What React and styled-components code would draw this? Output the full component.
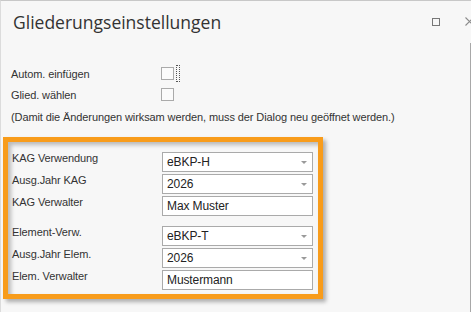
import React from 'react'
import styled, { createGlobalStyle } from 'styled-components'

const GlobalStyle = createGlobalStyle`
  html, body {
    margin: 0;
    padding: 0;
    background: #f7f7f7;
  }
`

const kagRows = [
  { label: 'KAG Verwendung', value: 'eBKP-H', select: true },
  { label: 'Ausg.Jahr KAG', value: '2026', select: true },
  { label: 'KAG Verwalter', value: 'Max Muster' },
]

const elemRows = [
  { label: 'Element-Verw.', value: 'eBKP-T', select: true },
  { label: 'Ausg.Jahr Elem.', value: '2026', select: true },
  { label: 'Elem. Verwalter', value: 'Mustermann' },
]

class App extends React.Component {
  renderRows(rows) {
    return rows.map(row => (
      <FieldRow key={row.label}>
        <Label>{row.label}</Label>
        <Field>
          {row.value}
          {row.select && <Arrow />}
        </Field>
      </FieldRow>
    ))
  }

  render() {
    return (
      <Window>
        <GlobalStyle />
        <TitleBar>
          <Title>Gliederungseinstellungen</Title>
          <WindowButtons>
            <MaxIcon />
            <CloseIcon viewBox="0 0 9 9">
              <path d="M0.5 0.5 L8.5 8.5 M8.5 0.5 L0.5 8.5" stroke="#8a8a8a" strokeWidth="1.1" />
            </CloseIcon>
          </WindowButtons>
        </TitleBar>

        <Body>
          <CheckRow>
            <Label>Autom. einfügen</Label>
            <CheckBox />
            <FocusRect />
          </CheckRow>
          <CheckRow>
            <Label>Glied. wählen</Label>
            <CheckBox />
          </CheckRow>
          <Note>
            (Damit die Änderungen wirksam werden, muss der Dialog neu geöffnet
            werden.)
          </Note>

          <Highlight>
            <Group>{this.renderRows(kagRows)}</Group>
            <Group>{this.renderRows(elemRows)}</Group>
          </Highlight>
        </Body>
      </Window>
    )
  }
}

export default App

const Window = styled.div`
  width: 471px;
  height: 312px;
  box-sizing: border-box;
  border-top: 1px solid #c8c8c8;
  border-left: 1px solid #dcdcdc;
  background: #f7f7f7;
  overflow: hidden;
  display: flex;
  flex-direction: column;
  font-family: 'Liberation Sans', Arial, sans-serif;
  font-size: 11px;
  letter-spacing: -0.1px;
  color: #333;
`

const TitleBar = styled.div`
  height: 42px;
  display: flex;
  align-items: center;
  justify-content: space-between;
  padding-left: 12px;
  flex-shrink: 0;
`

const Title = styled.div`
  font-family: 'Open Sans', 'Noto Sans', sans-serif;
  font-size: 17.5px;
  letter-spacing: 0;
  color: #333;
  margin-top: -1px;
`

const WindowButtons = styled.div`
  display: flex;
  align-items: center;
  gap: 25px;
  margin-right: -3px;
  margin-top: -1px;
`

const MaxIcon = styled.div`
  width: 6px;
  height: 6px;
  border: 1px solid #777;
`

const CloseIcon = styled.svg`
  width: 9px;
  height: 9px;
`

const Body = styled.div`
  flex: 1;
  border-right: 1px solid #a8a8a8;
  padding: 20px 0 0 10px;
  display: flex;
  flex-direction: column;
`

const CheckRow = styled.div`
  display: flex;
  align-items: center;
  height: 21px;
`

const Label = styled.div`
  width: 150px;
  flex-shrink: 0;
`

const CheckBox = styled.div`
  width: 11px;
  height: 11px;
  border: 1px solid #aaa;
  background: #fbfbfb;
`

const FocusRect = styled.div`
  width: 2px;
  height: 15px;
  margin-left: 2px;
  border: 1px dotted #555;
`

const Note = styled.div`
  margin-top: 1px;
  height: 22px;
  line-height: 22px;
`

const Highlight = styled.div`
  margin: 9px 0 0 -8px;
  width: 320px;
  box-sizing: border-box;
  border: 5px solid #f89c1b;
  padding: 10px 5px 4px 4px;
  display: flex;
  flex-direction: column;
  gap: 10px;
  box-shadow: 3px 3px 4px rgba(0, 0, 0, 0.3),
    inset 3px 3px 4px rgba(0, 0, 0, 0.25);
`

const Group = styled.div`
  display: flex;
  flex-direction: column;
  gap: 2px;
`

const FieldRow = styled.div`
  display: flex;
  align-items: flex-start;
`

const Field = styled.div`
  position: relative;
  flex: 1;
  height: 20px;
  box-sizing: border-box;
  border: 1px solid #aaa;
  background: #fff;
  padding-left: 4px;
  line-height: 18px;
  font-size: 12px;
  color: #222;
`

const Arrow = styled.span`
  position: absolute;
  right: 5px;
  top: 8px;
  width: 0;
  height: 0;
  border-left: 3px solid transparent;
  border-right: 3px solid transparent;
  border-top: 3px solid #9a9a9a;
`
